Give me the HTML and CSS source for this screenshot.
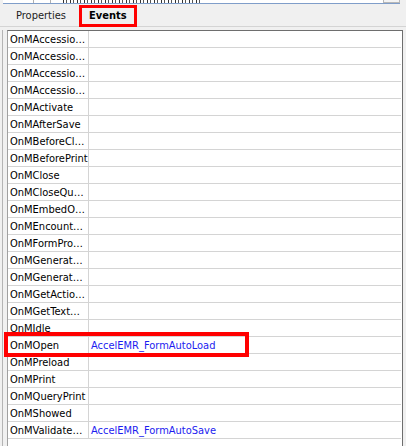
FILE: index.html
```html
<!DOCTYPE html>
<html lang="en">
<head>
  <meta charset="UTF-8" />
  <meta name="viewport" content="width=device-width, initial-scale=1.0"/>
  <title>Event Properties</title>
  <link rel="stylesheet" href="styles.css">
</head>
<body>
  <div class="topbar">
    <div class="topbar-cell first"></div>
    <div class="topbar-cell second"></div>
    <div class="topbar-strokes"></div>
    <div class="topbar-btn"></div>
  </div>

  <div class="tabs">
    <div class="tab">Properties</div>
    <div class="tab active">Events</div>
  </div>

  <div class="panel">
    <div class="grid">
      <div class="row"><div class="name">OnMAccessio…</div><div class="value"></div></div>
      <div class="row"><div class="name">OnMAccessio…</div><div class="value"></div></div>
      <div class="row"><div class="name">OnMAccessio…</div><div class="value"></div></div>
      <div class="row"><div class="name">OnMAccessio…</div><div class="value"></div></div>
      <div class="row"><div class="name">OnMActivate</div><div class="value"></div></div>
      <div class="row"><div class="name">OnMAfterSave</div><div class="value"></div></div>
      <div class="row"><div class="name">OnMBeforeCl…</div><div class="value"></div></div>
      <div class="row"><div class="name">OnMBeforePrint</div><div class="value"></div></div>
      <div class="row"><div class="name">OnMClose</div><div class="value"></div></div>
      <div class="row"><div class="name">OnMCloseQu…</div><div class="value"></div></div>
      <div class="row"><div class="name">OnMEmbedO…</div><div class="value"></div></div>
      <div class="row"><div class="name">OnMEncount…</div><div class="value"></div></div>
      <div class="row"><div class="name">OnMFormPro…</div><div class="value"></div></div>
      <div class="row"><div class="name">OnMGenerat…</div><div class="value"></div></div>
      <div class="row"><div class="name">OnMGenerat…</div><div class="value"></div></div>
      <div class="row"><div class="name">OnMGetActio…</div><div class="value"></div></div>
      <div class="row"><div class="name">OnMGetText…</div><div class="value"></div></div>
      <div class="row"><div class="name">OnMIdle</div><div class="value"></div></div>
      <div class="row highlight"><div class="name">OnMOpen</div><div class="value">AccelEMR_FormAutoLoad</div></div>
      <div class="row"><div class="name">OnMPreload</div><div class="value"></div></div>
      <div class="row"><div class="name">OnMPrint</div><div class="value"></div></div>
      <div class="row"><div class="name">OnMQueryPrint</div><div class="value"></div></div>
      <div class="row"><div class="name">OnMShowed</div><div class="value"></div></div>
      <div class="row"><div class="name">OnMValidate…</div><div class="value">AccelEMR_FormAutoSave</div></div>
      <div class="row empty"></div>
    </div>
  </div>
</body>
</html>
```

FILE: styles.css
```css
body {
  margin: 0;
  padding: 0;
  height: 446px;
  overflow: hidden;
  background-color: #f0f0f0;
  font-family: "DejaVu Sans Condensed", "Liberation Sans", sans-serif;
  font-size: 11px;
  color: #000;
}

.topbar {
  display: flex;
  height: 3px;
  margin: 0 6px 0 3px;
  background-color: #fff;
  border-bottom: 1px solid #7f9dc9;
  overflow: hidden;
}

.topbar-cell {
  border-right: 1px solid #b0b0b0;
}

.topbar-cell.first {
  width: 30px;
}

.topbar-cell.second {
  width: 16px;
}

/* bottoms of the clipped caption above */
.topbar-strokes {
  width: 140px;
  margin-left: 12px;
  background: repeating-linear-gradient(90deg, #333 0 1px, transparent 1px 3px, #555 3px 4px, transparent 4px 7px);
}

.topbar-btn {
  width: 15px;
  margin-left: auto;
  border: 1px solid #b8b8b8;
  border-top: none;
  background-color: #f4f4f4;
}

.tabs {
  display: flex;
  align-items: flex-start;
  height: 22px;
  padding-left: 10px;
  border-bottom: 1px solid #d4d4d4;
}

.tab {
  margin-top: 4px;
  padding: 0 6px;
  line-height: 16px;
  color: #222;
  white-space: nowrap;
}

.tab.active {
  margin-top: 1px;
  margin-left: 7px;
  padding: 0 7px;
  border: 3px solid #f00;
  font-weight: bold;
  color: #000;
}

.panel {
  margin: 3px 0 0 2px;
  padding-left: 4px;
  border-left: 1px solid #b4b4b4;
}

.grid {
  margin-right: 3px;
  padding-right: 1px;
  padding-bottom: 40px;
  background-color: #fff;
  border: 1px solid #a0a0a0;
  border-top-color: #6e6e6e;
  border-right-color: #6e6e6e;
}

.row {
  display: grid;
  grid-template-columns: 81px 1fr;
  height: 17px;
  box-sizing: border-box;
  border-bottom: 1px solid #d4d4d4;
  line-height: 18px;
}

.row.empty {
  border-bottom: none;
}

.name {
  padding-left: 2px;
  border-right: 1px solid #d4d4d4;
  white-space: nowrap;
  overflow: hidden;
}

.row.empty .name {
  display: none;
}

.value {
  padding-left: 2px;
  color: #1c1cf0;
  white-space: nowrap;
  overflow: hidden;
}

.row.highlight {
  position: relative;
}

.row.highlight::after {
  content: "";
  position: absolute;
  left: -4px;
  top: -5px;
  width: 237px;
  height: 17px;
  border: 4px solid #f00;
}
```
